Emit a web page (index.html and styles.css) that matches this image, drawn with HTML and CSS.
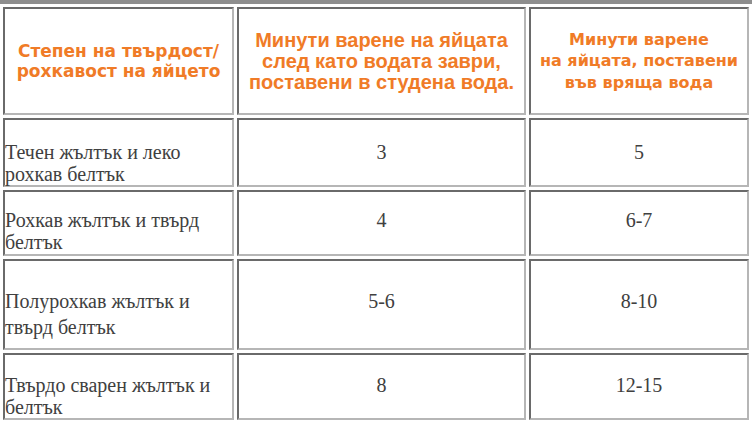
FILE: index.html
```html
<!DOCTYPE html>
<html lang="bg">
<head>
<meta charset="utf-8">
<link rel="stylesheet" href="styles.css">
</head>
<body>
<table class="eggs">
  <colgroup>
    <col class="c1"><col class="c2"><col class="c3">
  </colgroup>
  <thead>
    <tr class="head">
      <th class="h1">Степен на твърдост/<br>рохкавост на яйцето</th>
      <th class="h2">Минути варене на яйцата<br>след като водата заври,<br>поставени в студена вода.</th>
      <th class="h3">Минути варене<br>на яйцата, поставени<br>във вряща вода</th>
    </tr>
  </thead>
  <tbody>
    <tr class="r1">
      <td class="name">Течен жълтък и леко<br>рохкав белтък</td>
      <td class="num">3</td>
      <td class="num">5</td>
    </tr>
    <tr class="r2">
      <td class="name">Рохкав жълтък и твърд<br>белтък</td>
      <td class="num">4</td>
      <td class="num">6-7</td>
    </tr>
    <tr class="r3">
      <td class="name">Полурохкав жълтък и<br>твърд белтък</td>
      <td class="num">5-6</td>
      <td class="num">8-10</td>
    </tr>
    <tr class="r4">
      <td class="name">Твърдо сварен жълтък и<br>белтък</td>
      <td class="num">8</td>
      <td class="num">12-15</td>
    </tr>
  </tbody>
</table>
</body>
</html>
```

FILE: styles.css
```css
html, body {
  margin: 0;
  padding: 0;
  background: #ffffff;
  width: 752px;
  height: 423px;
  overflow: hidden;
}

.eggs {
  width: 752px;
  table-layout: fixed;
  border-collapse: separate;
  border-spacing: 3px;
  border-top: 4px solid #8e8e8e;
  border-bottom: 2px solid #2b2b2b;
  border-left: 0;
  border-right: 0;
  background: #ffffff;
}

.c1 { width: 231px; }
.c2 { width: 289px; }
.c3 { width: 220px; }

.eggs th,
.eggs td {
  box-sizing: border-box;
  border-style: solid;
  border-width: 2px;
  border-color: #6a6a6a #b6b6b6 #b6b6b6 #6a6a6a;
  padding: 0;
  background: #ffffff;
}

.head { height: 108px; }
.r1 { height: 69px; }
.r2 { height: 66px; }
.r3 { height: 91px; }
.r4 { height: 65px; }

.eggs th {
  color: #f07b27;
  font-weight: bold;
  text-align: center;
  vertical-align: middle;
  white-space: nowrap;
}

.h1 {
  font-family: "DejaVu Sans", Verdana, sans-serif;
  font-size: 17px;
  line-height: 20px;
  padding-top: 4px;
}

.h2 {
  font-family: "Liberation Sans", Arial, sans-serif;
  font-size: 20px;
  line-height: 21px;
  padding-bottom: 4px;
}

.h3 {
  font-family: "DejaVu Sans", Verdana, sans-serif;
  font-size: 16px;
  line-height: 21.5px;
}

.eggs td {
  font-family: "Liberation Serif", "Times New Roman", serif;
  font-size: 20px;
  line-height: 22px;
  color: #404040;
  vertical-align: top;
  white-space: nowrap;
}

.name {
  text-align: left;
  padding-left: 0;
}

.num {
  text-align: center;
}

.r1 td { padding-top: 21px; }
.r2 td { padding-top: 17px; }
.r3 td { padding-top: 27px; line-height: 26px; }
.r4 td { padding-top: 19px; }
```
